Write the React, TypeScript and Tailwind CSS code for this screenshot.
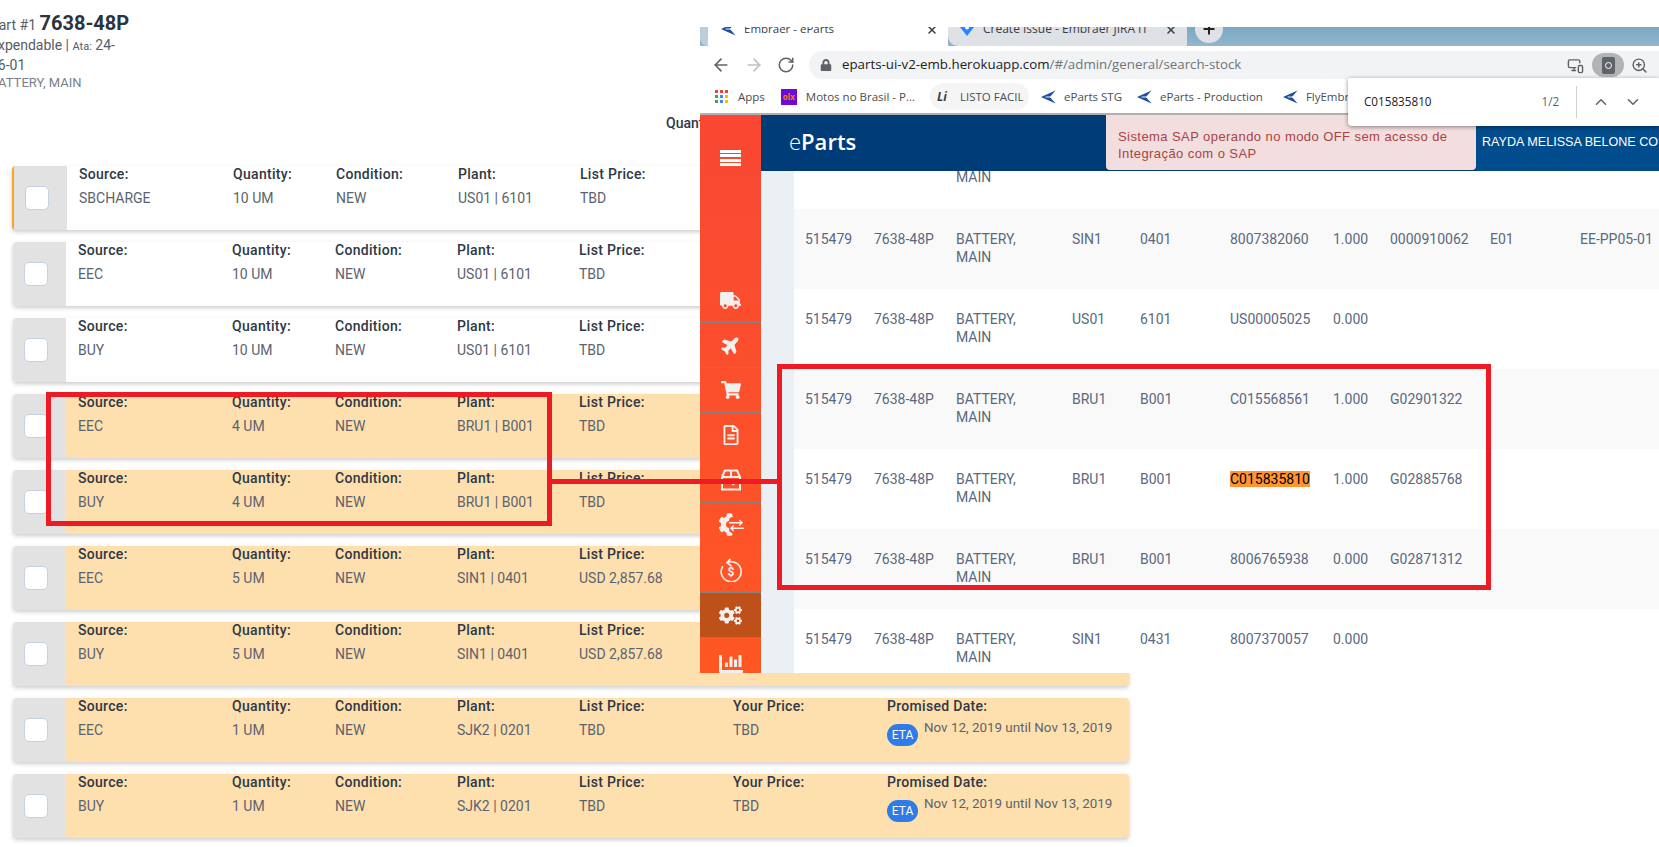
import {
  ArrowLeft,
  ArrowRight,
  ChevronDown,
  ChevronUp,
  MonitorSmartphone,
  Plus,
  RotateCw,
  X,
  ZoomIn,
} from "lucide-react";
import {
  FaChartBar,
  FaCog,
  FaCogs,
  FaLock,
  FaPlane,
  FaRegFileAlt,
  FaShoppingCart,
  FaTruck,
} from "react-icons/fa";

const offers = [
  { source: "SBCHARGE", qty: "10 UM", plant: "US01 | 6101", price: "TBD", first: true },
  { source: "EEC", qty: "10 UM", plant: "US01 | 6101", price: "TBD" },
  { source: "BUY", qty: "10 UM", plant: "US01 | 6101", price: "TBD" },
  { source: "EEC", qty: "4 UM", plant: "BRU1 | B001", price: "TBD", peach: true },
  { source: "BUY", qty: "4 UM", plant: "BRU1 | B001", price: "TBD", peach: true },
  { source: "EEC", qty: "5 UM", plant: "SIN1 | 0401", price: "USD 2,857.68", peach: true },
  { source: "BUY", qty: "5 UM", plant: "SIN1 | 0401", price: "USD 2,857.68", peach: true },
  { source: "EEC", qty: "1 UM", plant: "SJK2 | 0201", price: "TBD", peach: true, eta: true },
  { source: "BUY", qty: "1 UM", plant: "SJK2 | 0201", price: "TBD", peach: true, eta: true },
];

const stock = [
  { plant: "", loc: "", batch: "", qty: "", ref: "", desc: "MAIN" },
  { plant: "SIN1", loc: "0401", batch: "8007382060", qty: "1.000", ref: "0000910062", extra: "E01", bin: "EE-PP05-01" },
  { plant: "US01", loc: "6101", batch: "US00005025", qty: "0.000", ref: "" },
  { plant: "BRU1", loc: "B001", batch: "C015568561", qty: "1.000", ref: "G02901322" },
  { plant: "BRU1", loc: "B001", batch: "C015835810", qty: "1.000", ref: "G02885768", hit: true },
  { plant: "BRU1", loc: "B001", batch: "8006765938", qty: "0.000", ref: "G02871312" },
  { plant: "SIN1", loc: "0431", batch: "8007370057", qty: "0.000", ref: "" },
];

function OfferField({ label, value, width }: { label: string; value: string; width: string }) {
  return (
    <div className={width}>
      <div className="h-4 text-[14px] leading-4 font-medium tracking-[0.3px] text-[#2f3846]">{label}</div>
      <div className="mt-2 h-4 text-[14px] leading-4 text-[#5c636e]">{value}</div>
    </div>
  );
}

function OfferRow({ offer }: { offer: (typeof offers)[number] }) {
  return (
    <div
      className={`flex h-16 w-[1116px] shrink-0 overflow-hidden rounded-[4px] shadow-[0_2px_4px_rgba(0,0,0,0.2)] ${
        offer.first ? "-ml-px border-l-2 border-[#f5a623]" : ""
      } ${offer.peach ? "bg-[#fee0ae]" : "bg-white"}`}
    >
      <div className="flex w-[53px] shrink-0 items-start bg-[#e2e2e2] pt-5 pl-[11px]">
        <div className="h-6 w-6 rounded-[5px] border border-[#c5d0e2] bg-white" />
      </div>
      <div className="flex pl-3">
        <OfferField label="Source:" value={offer.source} width="w-[154px]" />
        <OfferField label="Quantity:" value={offer.qty} width="w-[103px]" />
        <OfferField label="Condition:" value="NEW" width="w-[122px]" />
        <OfferField label="Plant:" value={offer.plant} width="w-[122px]" />
        <OfferField label="List Price:" value={offer.price} width="w-[154px]" />
        {offer.eta && (
          <>
            <OfferField label="Your Price:" value="TBD" width="w-[154px]" />
            <div className="w-[240px]">
              <div className="h-4 text-[14px] leading-4 font-medium tracking-[0.3px] text-[#2f3846]">Promised Date:</div>
              <div className="mt-[1px] flex items-start">
                <span className="mt-[9px] flex h-[22px] w-[31px] items-center justify-center rounded-full bg-[#2f7be8] text-[12px] text-white">
                  ETA
                </span>
                <span className="mt-[5px] ml-[6px] text-[13.4px] leading-4 whitespace-nowrap text-[#5c636e]">
                  Nov 12, 2019 until Nov 13, 2019
                </span>
              </div>
            </div>
          </>
        )}
      </div>
    </div>
  );
}

function EmbraerMark({ className }: { className?: string }) {
  return (
    <svg viewBox="0 0 16 14" className={className}>
      <path d="M15.5 0 0 7l15.5 7-6-7z" fill="#1d4f9c" />
      <path d="M5 7h11" stroke="#fff" strokeWidth="1" />
    </svg>
  );
}

function BoxIcon() {
  return (
    <svg viewBox="0 0 24 24" className="h-[24px] w-[24px]" fill="none" stroke="currentColor" strokeWidth="2">
      <path d="M3 9 6 2.5h12L21 9v12.5H3z" />
      <path d="M3 9h18M12 2.5V9" />
      <path d="m11 13 4 4" />
    </svg>
  );
}

function GearSwapIcon() {
  return (
    <span className="relative block h-[24px] w-[26px]">
      <FaCog className="absolute top-0 left-0 h-[23px] w-[23px]" />
      <span className="absolute top-[4px] left-[11px] h-[16px] w-[15px] rounded-sm bg-[#ff5326]" />
      <svg viewBox="0 0 16 14" className="absolute top-[6px] left-[11px] h-[13px] w-[15px]" fill="none" stroke="currentColor" strokeWidth="1.5">
        <path d="M0 4h14m-3-3 3 3-3 3" />
        <path d="M16 10H2m3-3-3 3 3 3" />
      </svg>
    </span>
  );
}

function DollarBackIcon() {
  return (
    <svg viewBox="0 0 24 24" className="h-[24px] w-[24px]" fill="none" stroke="currentColor" strokeWidth="1.6">
      <path d="M8 4.6a10 10 0 1 1-4.2 3.6" />
      <path d="m11.5 0.8-3.6 3.8 4 3" />
      <text x="12" y="18" textAnchor="middle" fontSize="12" fontWeight="700" fill="currentColor" stroke="none" fontFamily="Roboto, sans-serif">
        $
      </text>
    </svg>
  );
}

function Sidebar() {
  const items = [
    { icon: <FaTruck className="h-[21px] w-[21px]" /> },
    { icon: <FaPlane className="h-[20px] w-[20px] -rotate-45" /> },
    { icon: <FaShoppingCart className="h-[20px] w-[20px]" /> },
    { icon: <FaRegFileAlt className="h-[20px] w-[18px]" /> },
    { icon: <BoxIcon /> },
    { icon: <GearSwapIcon /> },
    { icon: <DollarBackIcon /> },
    { icon: <FaCogs className="h-[23px] w-[23px]" />, active: true },
    { icon: <FaChartBar className="mt-[8px] h-[24px] w-[24px]" /> },
  ];
  return (
    <div className="w-[61px] shrink-0 overflow-hidden bg-gradient-to-b from-[#f94733] to-[#ff5722] text-[#f3efec]">
      <div className="flex h-[163px] justify-center pt-[35px]">
        <div className="flex h-4 w-[21px] flex-col justify-between">
          <span className="h-[3px] bg-white" />
          <span className="h-[3px] bg-white" />
          <span className="h-[3px] bg-white" />
          <span className="h-[3px] bg-white" />
        </div>
      </div>
      {items.map((item, i) => (
        <div
          key={i}
          className={`flex h-[45px] items-center justify-center border-b border-[#8d7f7b] ${
            item.active ? "bg-[#bd5119]" : ""
          }`}
        >
          {item.icon}
        </div>
      ))}
    </div>
  );
}

function StockRow({ row, index }: { row: (typeof stock)[number]; index: number }) {
  return (
    <div
      className={`grid h-20 shrink-0 grid-cols-[69px_82px_116px_68px_90px_103px_57px_100px_90px_1fr] pt-[21px] pl-[11px] text-[14px] leading-[18px] text-[#5a6980] ${
        index % 2 ? "bg-[#f9f9f9]" : "bg-white"
      }`}
    >
      {index === 0 ? (
        <>
          <div />
          <div />
          <div className="mt-[18px]">MAIN</div>
        </>
      ) : (
        <>
          <div>515479</div>
          <div>7638-48P</div>
          <div className="pr-[30px]">BATTERY, MAIN</div>
          <div>{row.plant}</div>
          <div>{row.loc}</div>
          <div>
            {row.hit ? <span className="bg-[#ff9632] text-black">{row.batch}</span> : row.batch}
          </div>
          <div>{row.qty}</div>
          <div>{row.ref}</div>
          <div>{row.extra}</div>
          <div>{row.bin}</div>
        </>
      )}
    </div>
  );
}

function BrowserWindow() {
  const bookmark = "flex items-center whitespace-nowrap text-[11.5px] text-[#4a4d52]";
  return (
    <div className="absolute top-[27px] left-[700px] flex h-[646px] w-[959px] flex-col overflow-hidden bg-white font-['Open_Sans']">
      {/* tab strip */}
      <div className="flex h-[19px] shrink-0 bg-gradient-to-b from-[#7aa8c2] to-[#93b6ce] text-[12px] text-[#3c4043]">
        <div className="w-2 rounded-bl-[8px] bg-[#b9cfe0]" />
        <div className="flex w-[240px] items-start bg-white pl-[13px]">
          <EmbraerMark className="-mt-[5px] h-[14px] w-[15px]" />
          <span className="-mt-[6px] ml-[8px] text-[11.5px] leading-4">Embraer - eParts</span>
          <X className="mt-[-3px] ml-auto mr-[10px] h-[12px] w-[12px]" strokeWidth={3} />
        </div>
        <div className="flex w-[239px] items-start rounded-bl-[10px] bg-[#dee1e6] pl-[12px]">
          <svg viewBox="0 0 14 12" className="-mt-[3px] h-[12px] w-[14px]">
            <path d="M0 3 3 0h8l3 3-7 9z" fill="#2684ff" />
            <circle cx="7" cy="3.5" r="2" fill="#fff" />
          </svg>
          <span className="-mt-[6px] ml-[9px] leading-4 whitespace-nowrap">Create Issue - Embraer JIRA IT</span>
          <X className="mt-[-3px] ml-auto mr-[10px] h-[12px] w-[12px]" strokeWidth={3} />
        </div>
        <div className="relative flex-1 rounded-bl-[10px] bg-gradient-to-b from-[#7aa8c2] to-[#93b6ce]">
          <span className="absolute -top-[12px] left-[8px] flex h-[28px] w-[28px] items-center justify-center rounded-full bg-[#dee1e6]">
            <Plus className="h-4 w-4 text-[#222]" strokeWidth={3} />
          </span>
        </div>
      </div>

      {/* address bar */}
      <div className="flex h-[34px] shrink-0 items-center pt-[4px] pl-[11px] text-[#5f6368]">
        <ArrowLeft className="h-5 w-5" />
        <ArrowRight className="ml-[13px] h-5 w-5 text-[#bdc1c6]" />
        <RotateCw className="ml-[13px] h-[18px] w-[18px]" />
        <div className="ml-[14px] flex h-[28px] flex-1 items-center rounded-l-full bg-[#f1f3f4] pl-[11px]">
          <FaLock className="h-3 w-3 text-[#5f6368]" />
          <span className="ml-[10px] text-[13.3px] whitespace-nowrap text-[#202124]">
            eparts-ui-v2-emb.herokuapp.com
            <span className="text-[#70757a]">/#/admin/general/search-stock</span>
          </span>
          <MonitorSmartphone className="ml-auto h-[17px] w-[17px]" />
          <span className="ml-[8px] flex h-6 w-8 items-center justify-center rounded-full bg-[#b1b3b5]">
            <span className="flex h-[17px] w-[13px] items-center justify-center rounded-[2px] bg-[#5f6368]">
              <span className="h-[7px] w-[7px] rounded-full border border-white" />
            </span>
          </span>
          <ZoomIn className="ml-[7px] mr-[11px] h-[17px] w-[17px]" />
        </div>
      </div>

      {/* bookmarks */}
      <div className="flex h-[35px] shrink-0 items-center border-b-2 border-[#b0b0b0] pl-[15px]">
        <div className="grid h-[13px] w-[13px] grid-cols-3 gap-[2px]">
          {["#ea4335", "#ea4335", "#ea4335", "#34a853", "#4285f4", "#fbbc05", "#34a853", "#4285f4", "#fbbc05"].map((c, i) => (
            <span key={i} className="block" style={{ backgroundColor: c }} />
          ))}
        </div>
        <span className={`${bookmark} ml-[10px]`}>Apps</span>
        <span className="ml-[16px] flex h-4 w-4 items-center justify-center bg-[#6e0ad6] text-[8px] font-bold text-[#f28000]">
          olx
        </span>
        <span className={`${bookmark} ml-[9px]`}>Motos no Brasil - P...</span>
        <div className={`${bookmark} ml-[15px] h-[27px] w-[99px] rounded-full bg-[#f5f5f5] pl-[7px]`}>
          <span className="w-[15px] text-[12px] font-bold text-[#3c4043] italic">Li</span>
          <span className="ml-[8px]">LISTO FACIL</span>
        </div>
        <EmbraerMark className="ml-[12px] h-[14px] w-[15px]" />
        <span className={`${bookmark} ml-[8px]`}>eParts STG</span>
        <EmbraerMark className="ml-[15px] h-[14px] w-[15px]" />
        <span className={`${bookmark} ml-[8px]`}>eParts - Production</span>
        <EmbraerMark className="ml-[20px] h-[14px] w-[15px]" />
        <span className={`${bookmark} ml-[8px]`}>FlyEmbraer</span>
      </div>

      {/* find in page */}
      <div className="absolute top-[51px] left-[648px] z-10 flex h-12 w-[311px] items-center rounded-bl-[4px] bg-white pl-4 text-[11.7px] text-[#202124] shadow-[0_1px_4px_rgba(0,0,0,0.45)]">
        <span>C015835810</span>
        <span className="ml-[110px] text-[#5f6368]">1/2</span>
        <span className="ml-[17px] h-8 w-px bg-[#d0d0d0]" />
        <ChevronUp className="ml-[15px] h-[18px] w-[18px] text-[#5f6368]" />
        <ChevronDown className="ml-[14px] h-[18px] w-[18px] text-[#5f6368]" />
      </div>

      {/* application */}
      <div className="flex min-h-0 flex-1">
        <Sidebar />
        <div className="flex min-w-0 flex-1 flex-col">
          <div className="flex h-14 shrink-0 bg-[#003d78]">
            <div className="w-[345px] pt-[11px] pl-[28px] text-[22px] leading-[30px] font-semibold text-white">
              <span className="font-light">e</span>Parts
            </div>
            <div className="h-[55px] w-[370px] rounded-b-[4px] bg-[#f2dede] pt-[13px] pl-[12px] font-['Liberation_Sans'] text-[13px] leading-[17px] tracking-[0.43px] text-[#a94442]">
              <div>Sistema SAP operando no modo OFF sem acesso de</div>
              <div>Integração com o SAP</div>
            </div>
            <div className="min-w-0 flex-1 overflow-hidden bg-[#004c8c] pt-[19px] pl-[6px] font-['Liberation_Sans'] text-[12.6px] leading-4 font-medium whitespace-nowrap text-white">
              RAYDA MELISSA BELONE COSTA
            </div>
          </div>
          <div className="flex min-h-0 flex-1 overflow-hidden">
            <div className="w-[33px] shrink-0 bg-[#ebf0f5]" />
            <div className="-mt-[42px] flex min-w-0 flex-1 flex-col font-['Roboto']">
              {stock.map((row, i) => (
                <StockRow key={i} row={row} index={i} />
              ))}
            </div>
          </div>
        </div>
      </div>
    </div>
  );
}

export default function App() {
  return (
    <div className="relative h-[847px] w-[1659px] overflow-hidden bg-white font-['Roboto']">
      {/* part summary and offers */}
      <div className="flex h-[166px]">
        <div className="w-[666px] -indent-[10px] text-[14px] leading-[18px] text-[#555c68]">
          <div className="mt-[11px] h-[24px] leading-[24px]">
            Part #1 <span className="text-[20px] font-bold text-[#2b3340]">7638-48P</span>
          </div>
          <div className="mt-px">
            Expendable | <span className="text-[11px]">Ata:</span> 24-
          </div>
          <div>36-01</div>
          <div className="h-[17px] text-[13px] text-[#7a808a]">BATTERY, MAIN</div>
        </div>
        <div className="pt-[115px] text-[14px] leading-4 font-medium text-[#2f3846]">Quantity</div>
      </div>
      <div className="flex flex-col gap-3 pl-[13px]">
        {offers.map((offer, i) => (
          <OfferRow key={i} offer={offer} />
        ))}
      </div>

      <BrowserWindow />

      {/* red annotation boxes */}
      <div className="absolute top-[392px] left-[46px] h-[134px] w-[506px] border-[5px] border-[#ed1c24]" />
      <div className="absolute top-[479px] left-[552px] h-[5px] w-[225px] bg-[#ed1c24]" />
      <div className="absolute top-[364px] left-[777px] h-[226px] w-[714px] border-[5px] border-[#ed1c24]" />
    </div>
  );
}
